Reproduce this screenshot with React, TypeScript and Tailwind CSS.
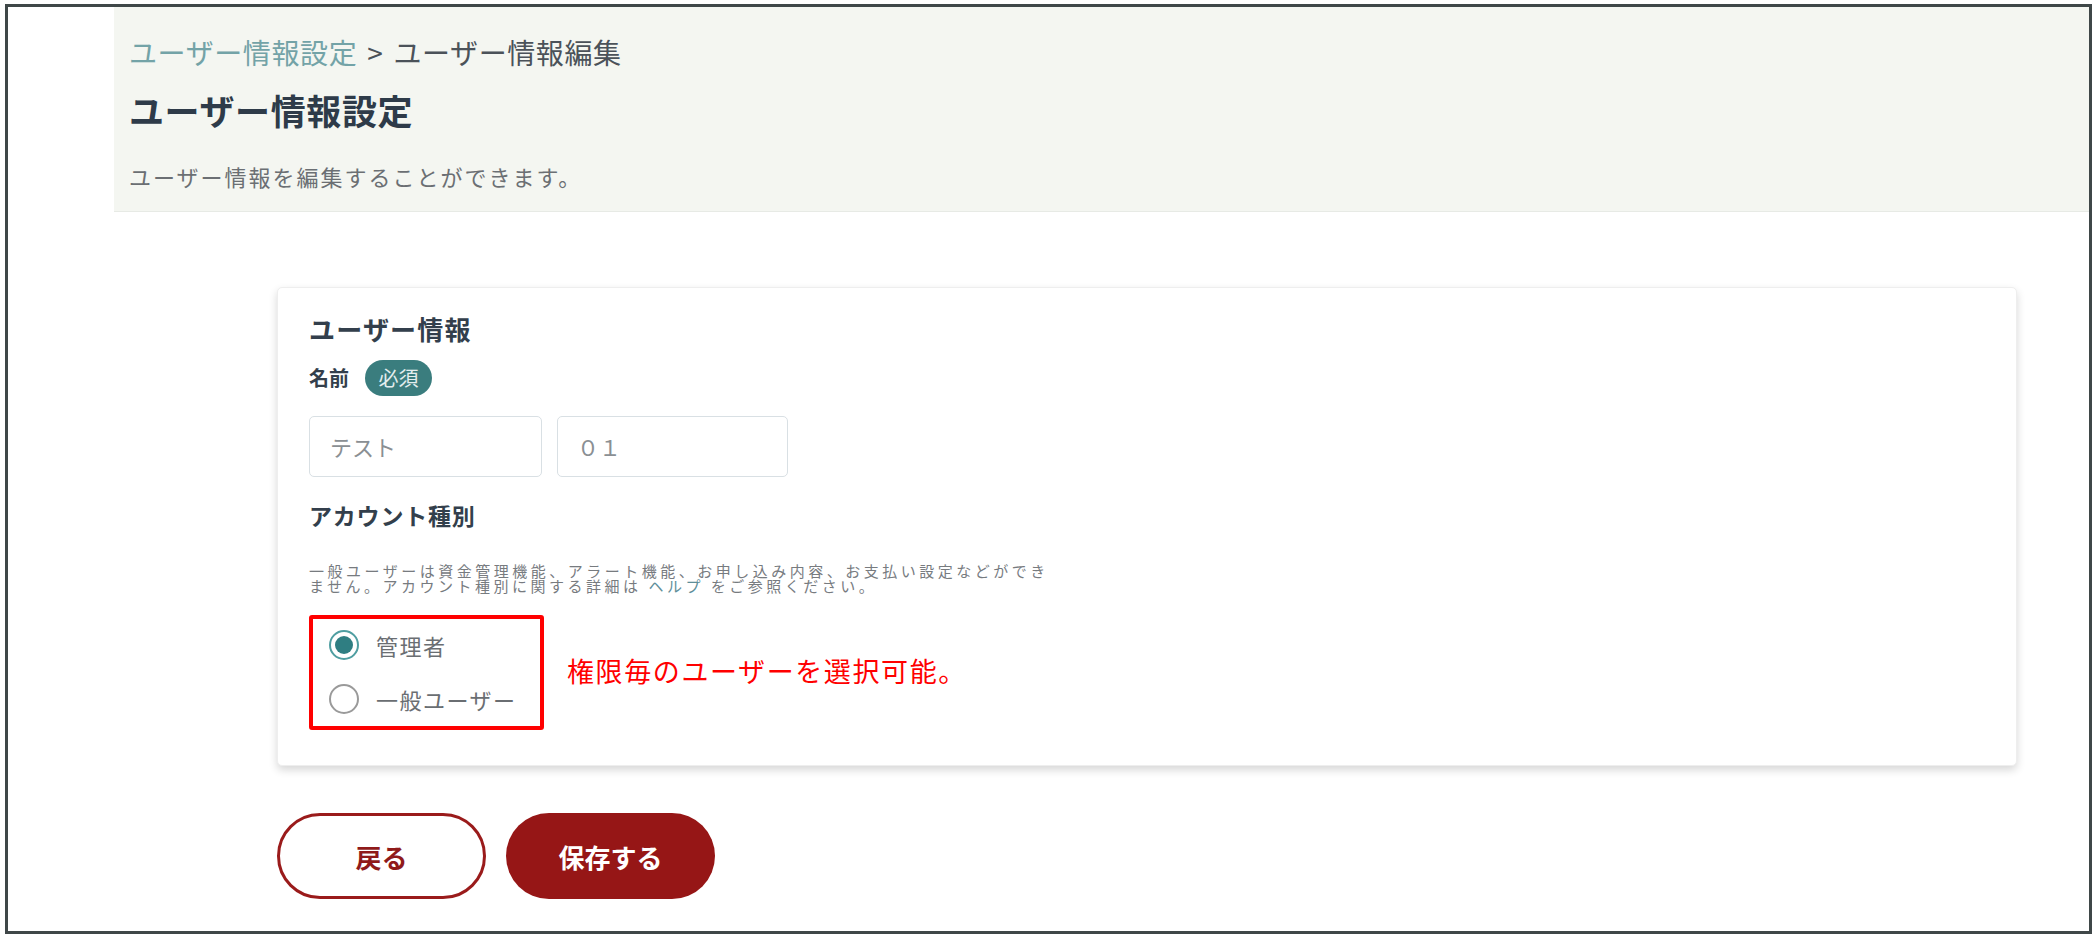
import React from "react";

function Radio({ checked }: { checked: boolean }) {
  return checked ? (
    <span className="flex h-[30px] w-[30px] items-center justify-center rounded-full border-[2.5px] border-[#4f9ea1] bg-white">
      <span className="h-[18px] w-[18px] rounded-full bg-[#2f7e82]" />
    </span>
  ) : (
    <span className="h-[30px] w-[30px] rounded-full border-[2px] border-[#9a9a9a] bg-white" />
  );
}

export default function App() {
  return (
    <div
      className="h-[944px] w-[2099px] bg-white pl-[5px] pt-[4px]"
      style={{ fontFamily: '"Noto Sans CJK JP", "Noto Sans", sans-serif' }}
    >
      <div className="flex h-[930px] w-[2087px] border-[3px] border-[#3f4748] bg-white">
        <div className="w-[106px] shrink-0" />
        <div className="flex min-w-0 flex-1 flex-col">
          {/* header */}
          <div className="flex flex-col border-b border-[#e7eae5] bg-[#f4f6f1] pb-[19px] pl-[15px] pt-[25px]">
            <div className="flex h-[40px] items-center text-[28px] tracking-[0.6px] text-[#4b5259]">
              <span className="text-[#73a3a7]">ユーザー情報設定</span>
              <span className="mx-[10px]">&gt;</span>
              <span>ユーザー情報編集</span>
            </div>
            <div className="mt-[14px] flex h-[48px] items-center text-[35px] font-bold tracking-[0.6px] text-[#2e3b49]">
              ユーザー情報設定
            </div>
            <div className="mt-[26px] flex h-[32px] items-center text-[22px] tracking-[2px] text-[#6b6f73]">
              ユーザー情報を編集することができます。
            </div>
          </div>

          {/* card */}
          <div className="ml-[163px] mt-[75px] flex w-[1740px] flex-col rounded-[5px] border border-[#eeeeee] bg-white pb-[35px] pl-[31px] pt-[22px] shadow-[0_4px_8px_rgba(0,0,0,0.16)]">
            <div className="flex h-[36px] items-center text-[26px] font-bold tracking-[1.2px] text-[#333f4c]">
              ユーザー情報
            </div>
            <div className="mt-[14px] flex h-[36px] items-center gap-[16px]">
              <span className="text-[20px] font-bold text-[#333f4c]">名前</span>
              <span className="flex h-[36px] w-[67px] items-center justify-center rounded-full bg-[#3a7d7e] text-[20px] text-[#e3eeee]">
                必須
              </span>
            </div>
            <div className="mt-[20px] flex gap-[15px]">
              <div className="flex h-[61px] w-[233px] items-center rounded-[5px] border border-[#d9e0e4] pl-[20px] text-[22px] text-[#8a8f93]">
                テスト
              </div>
              <div className="flex h-[61px] w-[231px] items-center rounded-[5px] border border-[#d9e0e4] pl-[19px] text-[22px] text-[#8a8f93]">
                ０１
              </div>
            </div>
            <div className="mt-[20px] flex h-[36px] items-center text-[23px] font-bold tracking-[0.8px] text-[#333f4c]">
              アカウント種別
            </div>
            <div className="mt-[30px] whitespace-nowrap text-[15px] leading-[15px] tracking-[3.5px] text-[#777b7f]">
              <div>一般ユーザーは資金管理機能、アラート機能、お申し込み内容、お支払い設定などができ</div>
              <div>
                ません。アカウント種別に関する詳細は <span className="text-[#5e8e99]">ヘルプ</span> をご参照ください。
              </div>
            </div>
            <div className="mt-[22px] flex items-center">
              <div className="flex h-[115px] w-[235px] flex-col gap-[18px] rounded-[3px] border-[4px] border-[#ff0000] pl-[16px] pt-[8px]">
                <div className="flex h-[36px] items-center gap-[17px]">
                  <Radio checked />
                  <span className="text-[22px] tracking-[1.5px] text-[#6a6e72]">管理者</span>
                </div>
                <div className="flex h-[36px] items-center gap-[17px]">
                  <Radio checked={false} />
                  <span className="text-[22px] tracking-[1.5px] text-[#6a6e72]">一般ユーザー</span>
                </div>
              </div>
              <div className="ml-[23px] -mt-[2px] text-[27px] tracking-[1.6px] text-[#ff0000]">
                権限毎のユーザーを選択可能。
              </div>
            </div>
          </div>

          {/* buttons */}
          <div className="ml-[163px] mt-[47px] flex gap-[20px]">
            <button className="flex h-[86px] w-[209px] items-center justify-center rounded-full border-[3px] border-[#9a1b1b] bg-white text-[26px] font-bold text-[#8f1a1a]">
              戻る
            </button>
            <button className="flex h-[86px] w-[209px] items-center justify-center rounded-full bg-[#961616] text-[26px] font-bold text-white">
              保存する
            </button>
          </div>
        </div>
      </div>
    </div>
  );
}
